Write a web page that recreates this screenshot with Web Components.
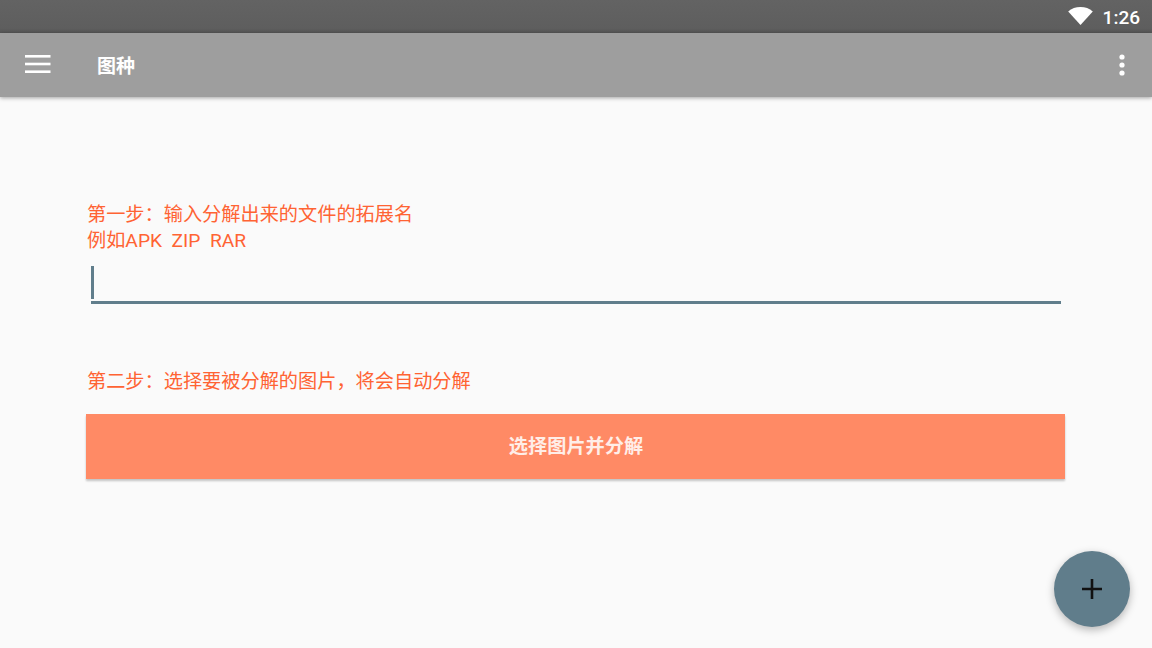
<!DOCTYPE html>
<html lang="zh">
<head>
<meta charset="utf-8">
<title>图种</title>
<style>
  html, body { margin: 0; height: 100%; background: #fafafa; overflow: hidden; }
  body {
    display: flex;
    flex-direction: column;
    width: 1152px;
    height: 648px;
    font-family: Roboto, "Noto Sans CJK SC", sans-serif;
  }
</style>
</head>
<body>
<status-bar time="1:26"></status-bar>
<app-toolbar title="图种"></app-toolbar>
<step-page>
  <step-label style="--label-height:52px">第一步：输入分解出来的文件的拓展名<br>例如APK&nbsp;&nbsp;ZIP&nbsp;&nbsp;RAR</step-label>
  <ext-input></ext-input>
  <step-label style="--label-height:27px;--label-top:65px">第二步：选择要被分解的图片，将会自动分解</step-label>
  <flat-button>选择图片并分解</flat-button>
</step-page>
<fab-button></fab-button>
<script>
'use strict';
class StatusBar extends HTMLElement {
  constructor() {
    super();
    this.root = this.attachShadow({mode: 'open'});
    this.root.innerHTML = `
    <style>
      :host {
        display: flex;
        flex: none;
        height: 33px;
        align-items: center;
        justify-content: flex-end;
        gap: 10px;
        padding-right: 12px;
        box-sizing: border-box;
        background: linear-gradient(#636363, #5e5e5e 85%, #575757);
        color: #fff;
        font: 500 19px Roboto, sans-serif;
      }
      svg { display: block; margin-top: -1px; }
      span { position: relative; top: 1px; }
    </style>
    <svg width="25" height="18" viewBox="0 0 25 18"><path fill="#fff" d="M12.5 18 .2 4.4C3.6 1.6 7.8 .1 12.5 .1s8.9 1.5 12.3 4.3z"/></svg>
    <span>${this.getAttribute('time')}</span>`;
  }
}
customElements.define('status-bar', StatusBar);

class AppToolbar extends HTMLElement {
  constructor() {
    super();
    this.root = this.attachShadow({mode: 'open'});
    this.root.innerHTML = `
    <style>
      :host {
        display: flex;
        flex: none;
        height: 64px;
        align-items: center;
        background: #9e9e9e;
        color: #fff;
        box-shadow: 0 1px 4px rgba(0, 0, 0, .35);
        position: relative;
        padding: 0 27px 0 25px;
      }
      .title {
        margin-left: 46px;
        margin-top: -2px;
        font: 700 19px "Noto Sans CJK SC", sans-serif;
        flex: 1;
      }
      svg { display: block; }
    </style>
    <svg width="26" height="20" viewBox="0 0 26 20" fill="#fff" style="margin-top:-2px">
      <rect y="1" width="25.5" height="2.6"/><rect y="8.7" width="25.5" height="2.6"/><rect y="16.4" width="25.5" height="2.6"/>
    </svg>
    <div class="title">${this.getAttribute('title')}</div>
    <svg width="6" height="24" viewBox="0 0 6 24" fill="#fff" style="margin-top:-1px">
      <circle cx="3" cy="4" r="2.6"/><circle cx="3" cy="12" r="2.6"/><circle cx="3" cy="20" r="2.6"/>
    </svg>`;
  }
}
customElements.define('app-toolbar', AppToolbar);

class StepPage extends HTMLElement {
  constructor() {
    super();
    this.root = this.attachShadow({mode: 'open'});
    this.root.innerHTML = `
    <style>
      :host {
        display: flex;
        flex-direction: column;
        flex: 1;
        padding: 105px 87px 0 86px;
      }
    </style>
    <slot></slot>`;
  }
}
customElements.define('step-page', StepPage);

class StepLabel extends HTMLElement {
  constructor() {
    super();
    this.root = this.attachShadow({mode: 'open'});
    this.root.innerHTML = `
    <style>
      :host {
        display: block;
        height: var(--label-height);
        margin-top: var(--label-top, 0);
        padding-left: 1px;
        color: #ff6333;
        font: 400 19.2px/26px Roboto, "Noto Sans CJK SC", sans-serif;
      }
    </style>
    <slot></slot>`;
  }
}
customElements.define('step-label', StepLabel);

class ExtInput extends HTMLElement {
  constructor() {
    super();
    this.root = this.attachShadow({mode: 'open'});
    this.root.innerHTML = `
    <style>
      :host {
        display: block;
        height: 38px;
        margin: 12px 4px 0 5px;
        box-sizing: border-box;
        border-bottom: 3px solid #607d8b;
      }
      .caret { width: 2.5px; height: 33px; background: #607d8b; }
    </style>
    <div class="caret"></div>`;
  }
}
customElements.define('ext-input', ExtInput);

class FlatButton extends HTMLElement {
  constructor() {
    super();
    this.root = this.attachShadow({mode: 'open'});
    this.root.innerHTML = `
    <style>
      :host {
        display: flex;
        height: 65px;
        margin-top: 18px;
        padding: 0 0 3px 1px;
        box-sizing: border-box;
        align-items: center;
        justify-content: center;
        background: #ff8a65;
        color: #ffeee8;
        box-shadow: 0 2px 2px rgba(0, 0, 0, .22);
        font: 700 19.2px "Noto Sans CJK SC", sans-serif;
      }
    </style>
    <slot></slot>`;
  }
}
customElements.define('flat-button', FlatButton);

class FabButton extends HTMLElement {
  constructor() {
    super();
    this.root = this.attachShadow({mode: 'open'});
    this.root.innerHTML = `
    <style>
      :host {
        position: absolute;
        left: 1054px;
        top: 551px;
        width: 76px;
        height: 76px;
        display: flex;
        align-items: center;
        justify-content: center;
        border-radius: 50%;
        background: #607d8b;
        box-shadow: 0 3px 8px rgba(0, 0, 0, .28);
      }
    </style>
    <svg width="20" height="20" viewBox="0 0 20 20"><path fill="#111" d="M8.7 0h2.6v8.7H20v2.6h-8.7V20H8.7v-8.7H0V8.7h8.7z"/></svg>`;
  }
}
customElements.define('fab-button', FabButton);
</script>
</body>
</html>
